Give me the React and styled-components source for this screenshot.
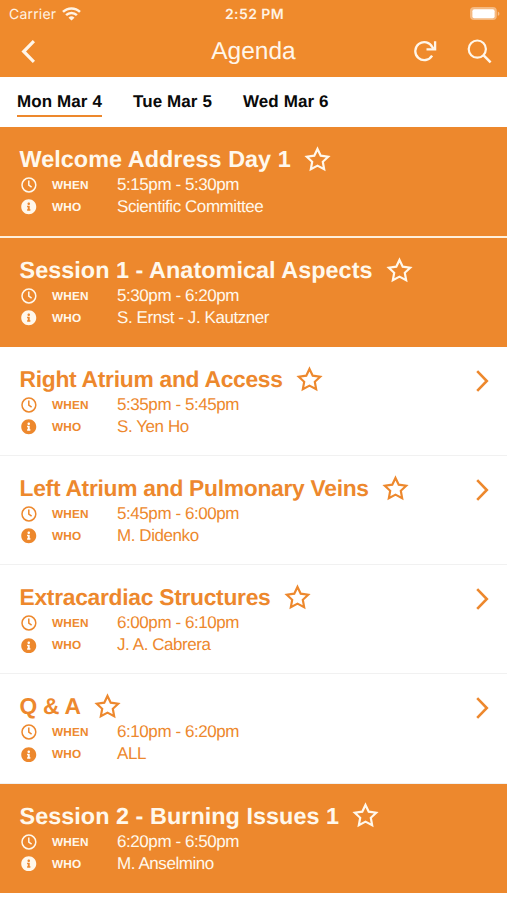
import React from 'react';
import styled, { createGlobalStyle } from 'styled-components';
import { FaInfoCircle } from 'react-icons/fa';

const ORANGE = '#ed882d';

const days = ['Mon Mar 4', 'Tue Mar 5', 'Wed Mar 6'];

const sessions = [
  { title: 'Welcome Address Day 1', when: '5:15pm - 5:30pm', who: 'Scientific Committee', filled: true, divider: true },
  { title: 'Session 1 - Anatomical Aspects', when: '5:30pm - 6:20pm', who: 'S. Ernst - J. Kautzner', filled: true },
  { title: 'Right Atrium and Access', when: '5:35pm - 5:45pm', who: 'S. Yen Ho' },
  { title: 'Left Atrium and Pulmonary Veins', when: '5:45pm - 6:00pm', who: 'M. Didenko' },
  { title: 'Extracardiac Structures', when: '6:00pm - 6:10pm', who: 'J. A. Cabrera' },
  { title: 'Q & A', when: '6:10pm - 6:20pm', who: 'ALL' },
  { title: 'Session 2 - Burning Issues 1', when: '6:20pm - 6:50pm', who: 'M. Anselmino', filled: true }
];

const WifiIcon = () => (
  <svg width="19" height="14" viewBox="0 0 19 14" fill="none" stroke="currentColor" strokeWidth="2.5">
    <path d="M1 4.9a12.1 12.1 0 0 1 17 0" />
    <path d="M4.1 8.2a7.7 7.7 0 0 1 10.8 0" />
    <path d="M9.5 13.6 6.5 10.8a4.3 4.3 0 0 1 6 0z" fill="currentColor" stroke="none" />
  </svg>
);

const BatteryIcon = () => (
  <svg width="30" height="14" viewBox="0 0 30 14">
    <rect x="0" y="0" width="26.8" height="13" rx="4" fill="#fff" fillOpacity="0.4" />
    <rect x="2.4" y="2.2" width="22.2" height="9" rx="2" fill="#fff" />
    <path d="M27.8 4.6c1.2.5 1.6 1.2 1.6 2.1s-.4 1.6-1.6 2.1z" fill="#fff" fillOpacity="0.45" />
  </svg>
);

const BackIcon = () => (
  <svg width="14" height="23" viewBox="0 0 14 23" fill="none" stroke="currentColor" strokeWidth="3.2">
    <path d="M12.9 1.2 2.7 11.5l10.2 10.3" />
  </svg>
);

const RefreshIcon = () => (
  <svg width="23" height="23" viewBox="0 0 23 23" fill="none" stroke="currentColor" strokeWidth="2.3">
    <path d="M18.1 15.6A9 9 0 1 1 18.4 7.2L19.6 8.8" />
    <path d="M21.1 1.2v8.1h-8.6" />
  </svg>
);

const SearchIcon = () => (
  <svg width="25" height="25" viewBox="0 0 25 25" fill="none" stroke="currentColor" strokeWidth="2.2">
    <circle cx="10.3" cy="10.1" r="8.6" />
    <path d="m16.4 16.2 7.2 7.2" strokeWidth="2.5" />
  </svg>
);

const StarIcon = () => (
  <svg width="27" height="27" viewBox="0 0 26 26" fill="none" stroke="currentColor" strokeWidth="2.1">
    <path d="M13 2.8 16.1 9.3 23.3 10.3 18.1 15.2 19.4 22.3 13 18.9 6.6 22.3 7.9 15.2 2.7 10.3 9.9 9.3z" />
  </svg>
);

const ClockIcon = () => (
  <svg width="16" height="16" viewBox="0 0 16 16" fill="none" stroke="currentColor" strokeWidth="1.5">
    <circle cx="7.9" cy="8" r="6.9" />
    <path d="M7.8 3.4v4.8l2.8 2" />
  </svg>
);

const ArrowIcon = () => (
  <svg width="13" height="22" viewBox="0 0 13 22" fill="none" stroke="currentColor" strokeWidth="2.6">
    <path d="M1.2 1.2 10.8 11 1.2 20.8" />
  </svg>
);

const App = () => (
  <Screen>
    <GlobalStyle />
    <StatusBar>
      <Carrier>Carrier <WifiIcon /></Carrier>
      <Time>2:52 PM</Time>
      <Battery><BatteryIcon /></Battery>
    </StatusBar>
    <NavBar>
      <BackButton aria-label="Back"><BackIcon /></BackButton>
      <NavTitle>Agenda</NavTitle>
      <NavActions>
        <NavButton aria-label="Refresh"><RefreshIcon /></NavButton>
        <NavButton aria-label="Search"><SearchIcon /></NavButton>
      </NavActions>
    </NavBar>
    <Tabs>
      {days.map((day, i) => (
        <Tab key={day} $active={i === 0}>{day}</Tab>
      ))}
    </Tabs>
    {sessions.map(session => (
      <Session key={session.title} $filled={session.filled} $divider={session.divider}>
        <Details>
          <TitleRow>
            <Title $filled={session.filled}>{session.title}</Title>
            <StarIcon />
          </TitleRow>
          <Meta>
            <ClockIcon />
            <Label>WHEN</Label>
            <Value>{session.when}</Value>
          </Meta>
          <Meta>
            <FaInfoCircle size={15.5} />
            <Label>WHO</Label>
            <Value>{session.who}</Value>
          </Meta>
        </Details>
        {!session.filled && <Arrow><ArrowIcon /></Arrow>}
      </Session>
    ))}
  </Screen>
);

const GlobalStyle = createGlobalStyle`
  body {
    margin: 0;
    background: #fff;
  }

  * {
    box-sizing: border-box;
  }

  svg {
    display: block;
    flex-shrink: 0;
  }
`;

const Screen = styled.div`
  height: 900px;
  overflow: hidden;
  background: #fff;
  font-family: 'Liberation Sans', Arial, sans-serif;
  text-rendering: geometricPrecision;
`;

const StatusBar = styled.div`
  display: grid;
  grid-template-columns: 1fr auto 1fr;
  align-items: center;
  height: 28px;
  padding: 0 7px 0 9px;
  background: #ef8a2c;
  color: #fff3e4;
  font-family: Inter, 'Liberation Sans', sans-serif;
`;

const Carrier = styled.span`
  display: flex;
  align-items: center;
  gap: 6px;
  font-size: 14px;
  letter-spacing: 0.2px;
`;

const Time = styled.span`
  font-size: 14px;
  font-weight: 600;
  letter-spacing: 0.4px;
`;

const Battery = styled.span`
  justify-self: end;
`;

const NavBar = styled.header`
  display: grid;
  grid-template-columns: 1fr auto 1fr;
  align-items: center;
  height: 48.5px;
  padding: 0 15px 1px;
  background: #ef8a2c;
  color: #fff6ea;
`;

const NavTitle = styled.h1`
  margin: 0;
  font-size: 24.5px;
  font-weight: 400;
  line-height: 47px;
`;

const NavButton = styled.button`
  display: flex;
  padding: 0;
  border: 0;
  background: none;
  color: inherit;
`;

const BackButton = styled(NavButton)`
  padding-left: 6px;
`;

const NavActions = styled.div`
  display: flex;
  align-items: center;
  justify-content: flex-end;
  gap: 30px;
`;

const Tabs = styled.nav`
  display: flex;
  gap: 31px;
  height: 50.5px;
  padding: 14.5px 17px 0;
`;

const Tab = styled.span`
  height: 26px;
  border-bottom: 2.5px solid ${props => (props.$active ? ORANGE : 'transparent')};
  color: #0a0a0a;
  font-size: 17px;
  font-weight: 700;
  letter-spacing: 0.1px;
  line-height: 22px;
  white-space: nowrap;
`;

const Session = styled.article`
  display: flex;
  justify-content: space-between;
  height: ${props => (props.$divider ? '111px' : '109.12px')};
  padding: 17px 18.5px 0 19.5px;
  border-bottom: ${props => {
    if (props.$divider) return '2px solid #fff0dc';
    return props.$filled ? '0' : '1px solid #f1f1f1';
  }};
  background: ${props => (props.$filled ? ORANGE : '#fff')};
  color: ${props => (props.$filled ? '#fff8ec' : ORANGE)};
`;

const Details = styled.div`
  display: flex;
  flex-direction: column;
`;

const TitleRow = styled.div`
  display: flex;
  align-items: center;
  gap: 13px;
  height: 30px;
`;

const Title = styled.h2`
  margin: 0;
  font-size: ${props => (props.$filled ? '23.4px' : '22.8px')};
  font-weight: 700;
  letter-spacing: ${props => (props.$filled ? '0.04px' : '-0.27px')};
  line-height: 30px;
  white-space: nowrap;
`;

const Meta = styled.div`
  display: grid;
  grid-template-columns: 31px 65px auto;
  align-items: center;
  height: 22px;
  padding-left: 1.5px;
`;

const Label = styled.span`
  font-size: 11.8px;
  font-weight: 700;
  letter-spacing: 0.2px;
`;

const Value = styled.span`
  font-size: 17px;
  letter-spacing: -0.43px;
  line-height: 22px;
  white-space: nowrap;
`;

const Arrow = styled.div`
  padding-top: 5.5px;
`;

export default App;
